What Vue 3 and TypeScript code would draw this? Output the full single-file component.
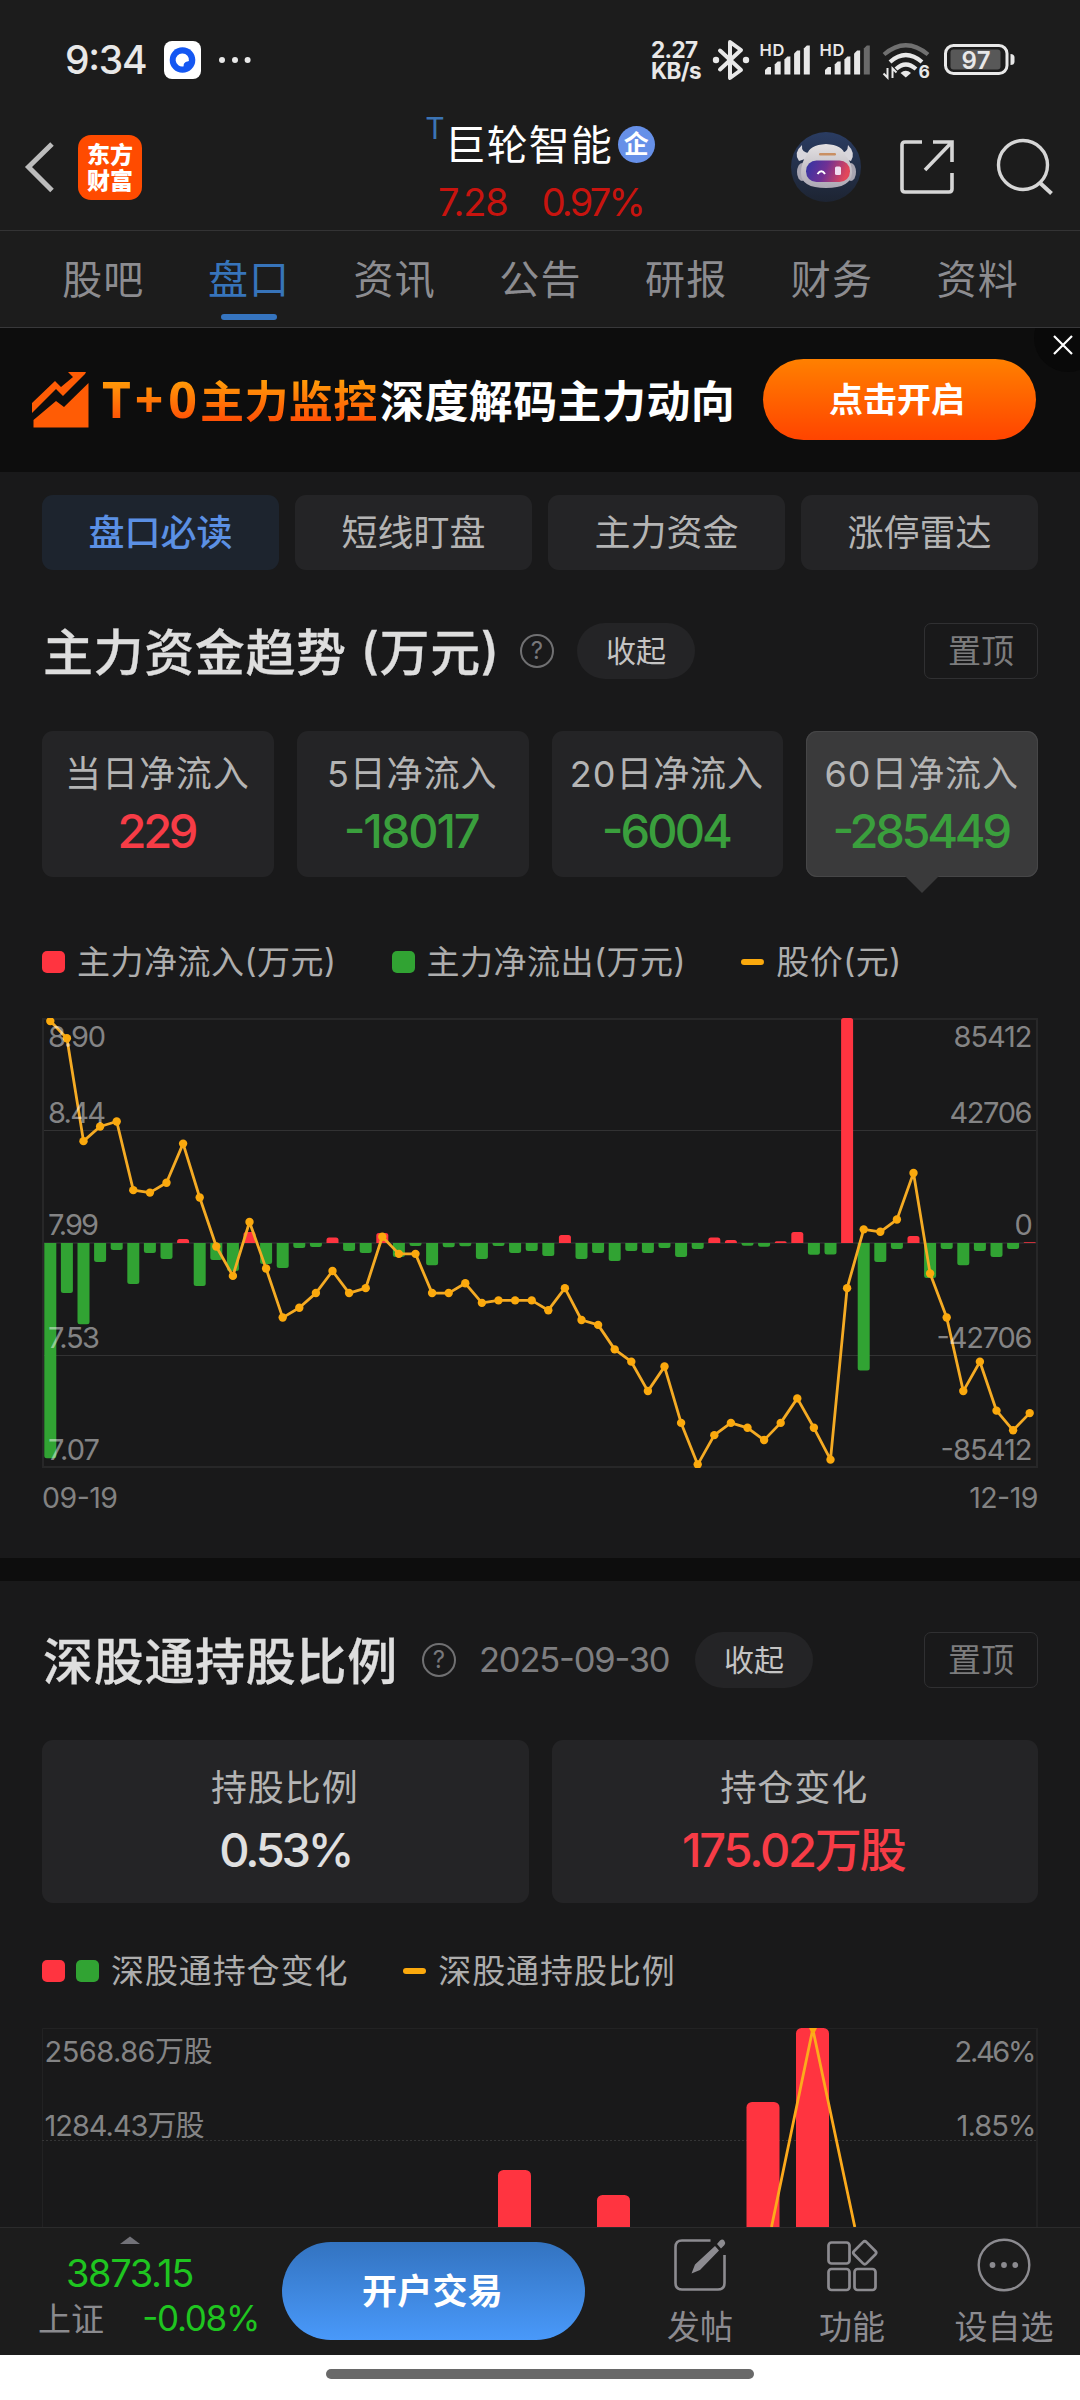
<script setup lang="ts">
interface Tab { label: string; active?: boolean }
interface FlowCard { label: string; value: string; tone: 'up' | 'down'; active?: boolean }

const tabs: Tab[] = [
  { label: '股吧' }, { label: '盘口', active: true }, { label: '资讯' }, { label: '公告' },
  { label: '研报' }, { label: '财务' }, { label: '资料' },
]
const chips: Tab[] = [
  { label: '盘口必读', active: true }, { label: '短线盯盘' }, { label: '主力资金' }, { label: '涨停雷达' },
]
const cards: FlowCard[] = [
  { label: '当日净流入', value: '229', tone: 'up' },
  { label: '5日净流入', value: '-18017', tone: 'down' },
  { label: '20日净流入', value: '-6004', tone: 'down' },
  { label: '60日净流入', value: '-285449', tone: 'down', active: true },
]

/* Daily closing price, 60 sessions */
const prices: number[] = [
  8.88, 8.81, 8.39, 8.45, 8.47, 8.19, 8.18, 8.22, 8.38, 8.16, 7.96, 7.84, 8.06, 7.87, 7.67,
  7.71, 7.77, 7.86, 7.77, 7.79, 8.0, 7.93, 7.93, 7.77, 7.77, 7.81, 7.73, 7.74, 7.74, 7.74,
  7.7, 7.79, 7.66, 7.64, 7.54, 7.49, 7.37, 7.47, 7.24, 7.07, 7.19, 7.24, 7.22, 7.17, 7.24,
  7.34, 7.22, 7.09, 7.79, 8.03, 8.02, 8.07, 8.26, 7.85, 7.67, 7.37, 7.49, 7.29, 7.21, 7.28,
]
/* Daily main-force net flow, in units of 1,000,000 yuan */
const flows: number[] = [
  -817, -190, -308, -72, -27, -156, -38, -61, 15, -163, -65, -106, 42, -80, -95,
  -19, -15, 21, -30, -38, 38, -53, -11, -84, -16, -12, -61, -11, -38, -30,
  -49, 30, -61, -38, -68, -30, -38, -19, -53, -23, 21, 11, -10, -14, 7,
  42, -45, -44, 854, -484, -72, -23, 27, -133, -23, -84, -30, -53, -23, 2.5,
]
const slot = 996 / 60
const zeroY = 225
const cx = (i: number): number => slot * (i + 0.5)
const priceY = (p: number): number => 395.1 - (p - 7.28) * 245
const points = prices.map((p, i) => ({ x: cx(i), y: priceY(p) }))
const pricePath = points.map((p) => `${p.x.toFixed(1)},${p.y.toFixed(1)}`).join(' ')
const barPath = (v: number, i: number): string => {
  const w = 12
  const h = (Math.abs(v) / 854.12) * 225
  const r = Math.min(2.5, h)
  const x = cx(i) - w / 2
  const s = v > 0 ? -1 : 1
  const end = zeroY + s * h
  return `M${x} ${zeroY}V${end - s * r}Q${x} ${end} ${x + r} ${end}H${x + w - r}Q${x + w} ${end} ${x + w} ${end - s * r}V${zeroY}Z`
}
const leftLabels = [
  { t: '8.90', y: 29, w: 58 }, { t: '8.44', y: 105, w: 58 }, { t: '7.99', y: 217, w: 51 },
  { t: '7.53', y: 330, w: 52 }, { t: '7.07', y: 442, w: 52 },
]
const rightLabels = [
  { t: '85412', y: 29, w: 79 }, { t: '42706', y: 105, w: 83 }, { t: '0', y: 217, w: 18 },
  { t: '-42706', y: 330, w: 96 }, { t: '-85412', y: 442, w: 92 },
]
const holdingBars = [
  { x: 456, y: 142 }, { x: 555, y: 167 }, { x: 704.5, y: 74 }, { x: 754, y: 0 },
]
const signalTops = [67, 61.5, 56.5, 50.5, 45.5]
</script>

<template>
  <div class="screen">
    <header class="status">
      <span class="clock">9:34</span>
      <svg class="app-mark" width="37" height="38" viewBox="0 0 37 38">
        <rect width="37" height="38" rx="8" fill="#fff" />
        <circle cx="18.5" cy="19" r="12.8" fill="#1457f2" />
        <path d="M18.5 12.5a6.5 6.5 0 1 0 1.2 12.8c-.2-2.8 1-4.2 5.2-5.2a6.5 6.5 0 0 0-6.4-7.6z" fill="#fff" />
      </svg>
      <svg class="dots" width="34" height="10" viewBox="0 0 34 10" fill="#e8e8e8">
        <circle cx="4" cy="5" r="3" /><circle cx="17" cy="5" r="3" /><circle cx="29.6" cy="5" r="3" />
      </svg>
      <div class="speed"><span>2.27</span><span>KB/s</span></div>
      <svg class="indicators" width="312" height="44" viewBox="708 38 312 44">
        <g fill="none" stroke="#e8e8e8" stroke-width="4" stroke-linejoin="round" stroke-linecap="round">
          <path d="M720 50.500l21 19.500-11 8V42l11 8-21 19.500" />
        </g>
        <circle cx="716" cy="60" r="3.200" fill="#e8e8e8" /><circle cx="746" cy="60" r="3.200" fill="#e8e8e8" />
        <g v-for="n in 2" :key="n" :transform="`translate(${(n - 1) * 60} 0)`">
          <text x="759.500" y="56" font-size="16.500" font-weight="600" textLength="25" fill="#e8e8e8">HD</text>
          <path
            v-for="(t, i) in signalTops" :key="t"
            :d="`M${765 + i * 9.7} 74.500V${t + 3}l3-3h3V74.500z`"
            :fill="n === 2 && i === 4 ? '#6a6a6a' : '#e8e8e8'"
          />
        </g>
        <g fill="none" stroke-width="4.200">
          <path d="M884 54.500Q905.700 36 928 54.500" stroke="#707070" />
          <path d="M890 62Q905.700 48 922 62" stroke="#e8e8e8" />
          <path d="M896 69Q905.700 60 916 69" stroke="#e8e8e8" />
        </g>
        <path d="M900.500 73q5.200-4.500 10.500 0l-5.200 4.500z" fill="#e8e8e8" />
        <path d="M887.500 68v9.500l-4-4M892.500 78v-9.500l4 4" fill="none" stroke="#e8e8e8" stroke-width="2" />
        <text x="918.500" y="78" font-size="17.500" font-weight="700" fill="#e8e8e8">6</text>
        <rect x="945.500" y="45.500" width="61.500" height="28" rx="8" fill="none" stroke="#e8e8e8" stroke-width="3" />
        <rect x="950.500" y="49.500" width="50" height="20" rx="3" fill="#585858" />
        <path d="M1010.500 54q4 0 4 3.500v4q0 3.500-4 3.500z" fill="#e8e8e8" />
        <text x="961.500" y="68.500" font-size="24" font-weight="600" textLength="29" fill="#e8e8e8">97</text>
      </svg>
    </header>

    <nav class="title-bar">
      <div class="side">
        <svg width="32" height="52" viewBox="0 0 32 52"><path d="M29 3L5.500 26 29 49.500" fill="none" stroke="#bcbcbc" stroke-width="5" /></svg>
        <div class="brand"><span>东方</span><span>财富</span></div>
      </div>
      <div class="stock">
        <div class="name-row">
          <sup class="margin-flag">T</sup><span class="name">巨轮智能</span><span class="corp">企</span>
        </div>
        <div class="quote"><span>7.28</span><span class="change">0.97%</span></div>
      </div>
      <div class="side tools">
        <svg width="70" height="70" viewBox="0 0 70 70">
          <defs>
            <linearGradient id="halo" x1="0" y1="0" x2="0" y2="1"><stop offset="0" stop-color="#2a3c62" /><stop offset="1" stop-color="#1d2432" /></linearGradient>
            <linearGradient id="visor" x1="0" y1="0" x2="1" y2="0.200"><stop offset="0" stop-color="#2f35a5" /><stop offset=".5" stop-color="#703094" /><stop offset="1" stop-color="#e2475a" /></linearGradient>
            <linearGradient id="shell" x1="0" y1="0" x2="0" y2="1"><stop offset="0" stop-color="#e4e1e2" /><stop offset="1" stop-color="#aca8b4" /></linearGradient>
          </defs>
          <circle cx="35" cy="35" r="35" fill="url(#halo)" />
          <path d="M11 13Q2 21 8 29L17 26L19 21Q10 21 11 13zM57 13Q65 21 60 29L51 26L49 21Q57 21 57 13z" fill="#d8d6dc" />
          <ellipse cx="11" cy="40" rx="5" ry="9" fill="#a8a5b2" /><ellipse cx="60" cy="40" rx="5" ry="9" fill="#a8a5b2" />
          <path d="M16 23Q18 13 35 12Q52 13 54 23Q61 30 61 41Q60 56 35 56Q10 56 10 41Q10 30 16 23z" fill="url(#shell)" />
          <rect x="15" y="28.500" width="44" height="21.500" rx="10.500" fill="url(#visor)" />
          <rect x="28" y="21" width="17" height="2.600" rx="1.300" fill="#c98f63" />
          <path d="M26.500 42q4-5.500 7.500 0" fill="none" stroke="#fff" stroke-width="2" />
          <rect x="44" y="34.500" width="6" height="8.500" rx="1.500" fill="#f0ddf0" />
        </svg>
        <svg class="share" width="54" height="54" viewBox="0 0 54 54" fill="none" stroke="#d6d6d6" stroke-width="3.600">
          <path d="M22 2H5Q2 2 2 5V49Q2 52 5 52H49Q52 52 52 49V33" />
          <path d="M33 2H52V22M52 2L25 30" />
        </svg>
        <svg class="search" width="58" height="58" viewBox="0 0 58 58" fill="none" stroke="#d6d6d6" stroke-width="3.400">
          <circle cx="27" cy="27" r="24.500" /><path d="M43 44L55.500 55.500" stroke-width="4" />
        </svg>
      </div>
    </nav>

    <nav class="tabs">
      <span v-for="t in tabs" :key="t.label" :class="['tab', { active: t.active }]">{{ t.label }}</span>
    </nav>

    <section class="banner">
      <svg class="trend" width="57" height="56" viewBox="0 0 57 56" fill="#ff5c05">
        <path d="M0 31L23 9 29 15 41 5 36 0H54L53 2 31 24 24 17 0 41zM1.500 48L24 29 32 35 56.500 11V55.500H1.500z" />
      </svg>
      <p class="slogan"><span class="hot"><span class="tplus">T+0</span>主力监控</span><span>深度解码主力动向</span></p>
      <button class="open-btn">点击开启</button>
      <span class="close"><svg width="20" height="20" viewBox="0 0 20 20"><path d="M1 1L19 19M19 1L1 19" stroke="#fff" stroke-width="2.200" /></svg></span>
    </section>

    <main class="content">
      <div class="chips">
        <span v-for="c in chips" :key="c.label" :class="['chip', { active: c.active }]">{{ c.label }}</span>
      </div>

      <section class="panel flow">
        <div class="head">
          <h2>主力资金趋势 (万元)</h2>
          <span class="help">?</span>
          <span class="fold">收起</span>
          <span class="pin">置顶</span>
        </div>
        <div class="cards">
          <div v-for="c in cards" :key="c.label" :class="['card', { active: c.active }]">
            <span class="card-label">{{ c.label }}</span>
            <span :class="['card-value', c.tone]">{{ c.value }}</span>
          </div>
        </div>
        <div class="legend">
          <i class="sq red" /><span>主力净流入(万元)</span>
          <i class="sq green second" /><span>主力净流出(万元)</span>
          <i class="dash third" /><span>股价(元)</span>
        </div>
        <svg class="chart" width="996" height="450" viewBox="0 0 996 450">
          <path d="M0 112.500H996M0 337.500H996" stroke="#323233" stroke-width="1" />
          <path d="M0 225H996" stroke="#272728" stroke-width="2" />
          <rect x="1" y="1" width="994" height="448" fill="none" stroke="#272728" stroke-width="2" />
          <path v-for="(v, i) in flows" :key="i" :d="barPath(v, i)" :fill="v > 0 ? '#ff3440' : '#31a333'" />
          <polyline :points="pricePath" fill="none" stroke="#f5ab24" stroke-width="2.800" stroke-linejoin="round" />
          <circle v-for="(p, i) in points" :key="i" :cx="p.x" :cy="p.y" r="4.200" fill="#fba90d" />
          <g class="axis">
            <text v-for="l in leftLabels" :key="l.t" x="6" :y="l.y" :textLength="l.w">{{ l.t }}</text>
            <text v-for="l in rightLabels" :key="l.t" :x="990.500 - l.w" :y="l.y" :textLength="l.w">{{ l.t }}</text>
          </g>
        </svg>
        <div class="dates"><span>09-19</span><span>12-19</span></div>
      </section>

      <section class="panel holding">
        <div class="head">
          <h2>深股通持股比例</h2>
          <span class="help">?</span>
          <time>2025-09-30</time>
          <span class="fold">收起</span>
          <span class="pin">置顶</span>
        </div>
        <div class="cards wide">
          <div class="card"><span class="card-label">持股比例</span><span class="card-value">0.53%</span></div>
          <div class="card"><span class="card-label">持仓变化</span><span class="card-value up">175.02万股</span></div>
        </div>
        <div class="legend">
          <i class="sq red" /><i class="sq green near" /><span>深股通持仓变化</span>
          <i class="dash third" /><span>深股通持股比例</span>
        </div>
        <svg class="chart" width="996" height="199" viewBox="0 0 996 199">
          <path d="M0.500 199V0.500H994" fill="none" stroke="#222223" />
          <path d="M995 0V199" stroke="#222223" stroke-width="2" />
          <path d="M0 112.500H994" stroke="#353536" stroke-dasharray="2 2" />
          <rect v-for="b in holdingBars" :key="b.x" :x="b.x" :y="b.y" width="33" height="300" rx="5.500" fill="#ff3440" />
          <path d="M729.500 199L770.800 1 812.800 199" fill="none" stroke="#fcaa1c" stroke-width="2.800" />
          <path d="M767 0h8l-2.500 5h-3z" fill="#fba90d" />
          <g class="axis">
            <text x="2.500" y="34" textLength="168">2568.86万股</text>
            <text x="2.500" y="108" textLength="160">1284.43万股</text>
            <text x="2.500" y="222.500">0股</text>
            <text x="912.500" y="34" textLength="82">2.46%</text>
            <text x="914.500" y="108" textLength="80">1.85%</text>
          </g>
        </svg>
      </section>
    </main>

    <footer class="dock">
      <div class="index">
        <svg width="20" height="8" viewBox="0 0 20 8"><path d="M0 8L10 0.500 20 8z" fill="#727278" /></svg>
        <span class="index-value">3873.15</span>
        <span class="index-row"><span class="index-name">上证</span><span class="index-pct">-0.08%</span></span>
      </div>
      <button class="trade">开户交易</button>
      <div class="action">
        <svg width="54" height="54" viewBox="0 0 54 54" fill="none" stroke="#8c8b90" stroke-width="2.600">
          <path d="M37.500 2.500H9Q2.500 2.500 2.500 9V45Q2.500 51.500 9 51.500H45Q51.500 51.500 51.500 45V17" />
          <path d="M18.500 35.500L22 26.500 42 8 46 12.500 27 32zM44 6l3-3.500q2.500-2 4.300.2t.2 4.300L48 10.500z" fill="#8c8b90" stroke="none" />
        </svg>
        <span>发帖</span>
      </div>
      <div class="action">
        <svg width="54" height="54" viewBox="0 0 54 54" fill="none" stroke="#8c8b90" stroke-width="2.700">
          <rect x="3.500" y="4.500" width="21" height="21" rx="3" /><rect x="3.500" y="31" width="21" height="21" rx="3" />
          <rect x="29.500" y="31" width="21" height="21" rx="3" />
          <rect x="31" y="6" width="17.500" height="17.500" rx="2.500" transform="rotate(45 39.750 14.750)" />
        </svg>
        <span>功能</span>
      </div>
      <div class="action">
        <svg width="54" height="54" viewBox="0 0 54 54" fill="#8c8b90">
          <circle cx="27" cy="27" r="25.300" fill="none" stroke="#8c8b90" stroke-width="2.400" />
          <circle cx="15.500" cy="27" r="2.900" /><circle cx="27" cy="27" r="2.900" /><circle cx="38.300" cy="27" r="2.900" />
        </svg>
        <span>设自选</span>
      </div>
    </footer>
    <div class="gesture"><i /></div>
  </div>
</template>

<style>
body {
  margin: 0;
  background: #19191a;
}
</style>

<style scoped>
.screen {
  width: 1080px;
  height: 2400px;
  overflow: hidden;
  display: flex;
  flex-direction: column;
  background: #19191a;
  color: #b4b4b4;
  font-family: Inter, "Noto Sans CJK SC", sans-serif;
  font-feature-settings: "case";
  line-height: 1;
}
button { border: 0; padding: 0; font-family: inherit; color: #fff; }
svg { display: block; flex: none; }
.status, .title-bar, .tabs, .dock { background: #1c1c1c; flex: none; box-sizing: border-box; }

/* status bar */
.status { height: 104px; display: flex; align-items: flex-start; padding-top: 38px; color: #e8e8e8; }
.clock { width: 99px; margin-left: 65px; font-size: 39px; line-height: 44px; letter-spacing: -1.300px; font-weight: 500; }
.app-mark { margin-top: 3px; }
.dots { margin: 17px 0 0 17px; }
.speed { display: flex; flex-direction: column; width: 57px; margin-left: 399px; font-size: 22.500px; font-weight: 700; line-height: 20.500px; letter-spacing: -0.600px; padding-top: 2px; }

/* title bar */
.title-bar { height: 127px; border-bottom: 1px solid #333334; display: flex; justify-content: space-between; }
.side { width: 360px; display: flex; align-items: flex-start; padding-top: 31px; box-sizing: border-box; }
.side > svg:first-child { margin: 6px 0 0 23px; }
.brand { width: 64px; height: 65px; margin-left: 23px; border-radius: 13px; background: #ff4b00; color: #fff; font-size: 23px; font-weight: 900; line-height: 26px; display: flex; flex-direction: column; align-items: center; justify-content: center; }
.stock { width: 360px; display: flex; flex-direction: column; align-items: center; padding-top: 15px; }
.name-row { display: flex; align-items: center; height: 50px; }
.margin-flag { align-self: flex-start; font-size: 30px; line-height: 30px; color: #3b74b5; margin: -6px 0 0 0; font-weight: 400; }
.name { font-size: 41px; line-height: 50px; color: #fff; letter-spacing: 1px; padding-top: 1px; }
.corp { width: 37px; height: 37px; margin-left: 5px; border-radius: 50%; background: #6690e8; color: #fff; font-size: 25px; font-weight: 700; line-height: 37px; text-align: center; }
.quote { display: flex; gap: 34px; margin: 14px 0 0 1px; color: #c8140f; font-size: 38px; line-height: 38px; letter-spacing: -1.200px; }
.change { letter-spacing: -2.800px; }
.tools { padding-left: 71px; }
.tools > svg:first-child { margin: -3px 0 0; }
.share { margin: 5px 0 0 39px; }
.search { margin: 3px 0 0 42px; }

/* tabs */
.tabs { height: 97px; border-bottom: 1px solid #38383a; padding: 0 30px; display: flex; }
.tab { flex: 1; display: flex; flex-direction: column; align-items: center; font-size: 40px; line-height: 40px; padding-top: 29px; color: #8c8c90; letter-spacing: 1.200px; text-indent: 1px; }
.tab.active { color: #3774ba; }
.tab.active::after { content: ""; width: 56px; height: 6px; margin-top: 14px; border-radius: 3px; background: #3574bf; }

/* banner */
.banner { position: relative; height: 144px; flex: none; background: #0d0d0d; display: flex; align-items: flex-start; overflow: hidden; }
.trend { margin: 44px 0 0 32px; }
.slogan { width: 661px; margin: 45px 0 0 13px; font-size: 44px; line-height: 52px; font-weight: 700; color: #fff; white-space: nowrap; letter-spacing: 0.400px; }
.hot { display: inline-block; width: 278px; background: linear-gradient(#ff9a08 15%, #ff5206 85%); -webkit-background-clip: text; background-clip: text; color: transparent; }
.tplus { display: inline-block; width: 98px; font-family: "Noto Sans", sans-serif; font-size: 50px; letter-spacing: 4px; }
.open-btn { width: 273px; height: 81px; margin-top: 31px; padding-right: 5px; border-radius: 41px; background: linear-gradient(#ff8000, #ff4400); font-size: 34px; font-weight: 700; line-height: 79px; }
.close { position: absolute; right: -22px; top: -24px; width: 68px; height: 68px; border-radius: 50%; background: #090909; }
.close svg { margin: 31px 0 0 19px; }

/* content */
.content { height: 1755px; flex: none; overflow: hidden; }
.chips { display: flex; gap: 16px; padding: 23px 42px 0; }
.chip { flex: 1; height: 75px; line-height: 77px; text-align: center; border-radius: 11px; background: #242426; font-size: 36px; }
.chip.active { background: #1d242e; color: #5b90e4; font-weight: 500; }
.panel { padding: 0 42px; }
.flow { box-sizing: border-box; height: 1011px; padding-top: 53px; border-bottom: 23px solid #0d0d0d; }
.head { display: flex; align-items: center; height: 56px; }
h2 { margin: 0 0 0 1px; padding-top: 4px; font-size: 50px; line-height: 56px; font-weight: 500; color: #dedede; letter-spacing: 0.600px; white-space: nowrap; -webkit-text-stroke: 0.300px #dedede; }
.flow h2 { width: 477px; }
.holding h2 { width: 379px; letter-spacing: 0.700px; }
.help { box-sizing: border-box; width: 34px; height: 34px; border: 2.500px solid #707072; border-radius: 50%; text-align: center; font-size: 24px; line-height: 30px; color: #77777a; }
.fold { width: 118px; height: 56px; margin-left: 23px; border-radius: 28px; background: #242426; text-align: center; font-size: 30px; line-height: 56px; color: #c4c4c4; }
.pin { box-sizing: border-box; width: 114px; height: 56px; margin-left: auto; border: 1.500px solid #303032; border-radius: 7px; text-align: center; font-size: 33px; line-height: 55px; color: #7c7c7d; }
time { width: 192px; margin-left: 23px; font-size: 34.500px; color: #7e7e80; letter-spacing: -1.200px; white-space: nowrap; }
.holding .fold { margin-left: 24px; }

.cards { display: flex; gap: 23px; margin-top: 52px; }
.card { position: relative; box-sizing: border-box; flex: 1; height: 146px; border-radius: 11px; background: #242426; display: flex; flex-direction: column; align-items: center; padding-top: 23px; }
.card.active { background: #3a3a3b; box-shadow: inset 0 0 0 1px #464647; }
.card.active::after { content: ""; position: absolute; top: 145px; left: 50%; margin-left: -17px; border: 17px solid transparent; border-top-color: #3a3a3b; border-bottom: 0; }
.card-label { font-size: 36px; line-height: 40px; letter-spacing: 0.900px; margin-left: -1px; white-space: nowrap; }
.card-value { margin-top: 13px; padding-right: 3px; font-size: 47px; line-height: 48px; font-weight: 500; letter-spacing: -3.300px; color: #e0e0e0; white-space: nowrap; }
.card:nth-child(2) .card-value { letter-spacing: -2.100px; }
.card:nth-child(3) .card-value { letter-spacing: -2.900px; }
.up { color: #f73c46; }
.down { color: #3a9f3d; }
.wide .card { height: 163px; padding-top: 28px; }
.wide .card .card-value { margin-top: 18px; padding-right: 0; letter-spacing: -3.200px; }
.wide .card .up { padding-right: 3px; letter-spacing: -2.200px; }

.legend { display: flex; align-items: center; height: 40px; margin-top: 65px; font-size: 33px; line-height: 41px; color: #adadad; letter-spacing: 0.500px; white-space: nowrap; }
.holding .legend { margin-top: 48px; letter-spacing: 0.900px; }
.sq { width: 23px; height: 22px; border-radius: 5px; margin-right: 12px; }
.sq.near { margin-left: -1px; }
.red { background: #ff3440; }
.green { background: #31a333; }
.dash { width: 23px; height: 6px; border-radius: 3px; background: #fba90d; margin-right: 12px; }
.second, .third { margin-left: 55px; }
.chart { margin-top: 36px; }
.holding .chart { margin-top: 37px; }
.chart text { font-size: 29px; }
.axis { fill: rgba(255, 255, 255, 0.47); }
.dates { display: flex; justify-content: space-between; margin-top: 13px; font-size: 28.500px; line-height: 34px; color: #828282; letter-spacing: -0.500px; }
.holding { padding-top: 51px; }

/* bottom dock */
.dock { height: 128px; border-top: 1px solid #2b2b2c; display: flex; align-items: flex-start; }
.index { width: 282px; display: flex; flex-direction: column; align-items: center; padding-top: 8px; box-sizing: border-box; padding-right: 23px; }
.index-value { margin-top: 10px; font-size: 38px; line-height: 38px; letter-spacing: -1.400px; color: #1fc520; }
.index-row { width: 221px; display: flex; align-self: flex-start; justify-content: space-between; margin: 9px 0 0 38px; line-height: 34px; }
.index-name { font-size: 33px; line-height: 36px; color: #8a8a8e; }
.index-pct { font-size: 35px; letter-spacing: -1.300px; color: #1fc520; }
.trade { width: 303px; height: 98px; margin: 14px 39px 0 0; padding-right: 2px; border-radius: 49px; background: linear-gradient(#3373c0, #4999fa); font-size: 35px; font-weight: 700; line-height: 96px; letter-spacing: 0.300px; }
.action { width: 152px; display: flex; flex-direction: column; align-items: center; padding-top: 10px; font-size: 33px; line-height: 36px; color: #8c8b90; }
.action span { margin-top: 17px; }
.gesture { height: 45px; background: #fff; display: flex; justify-content: center; }
.gesture i { width: 428px; height: 10px; margin-top: 14px; border-radius: 5px; background: #696969; }
</style>
